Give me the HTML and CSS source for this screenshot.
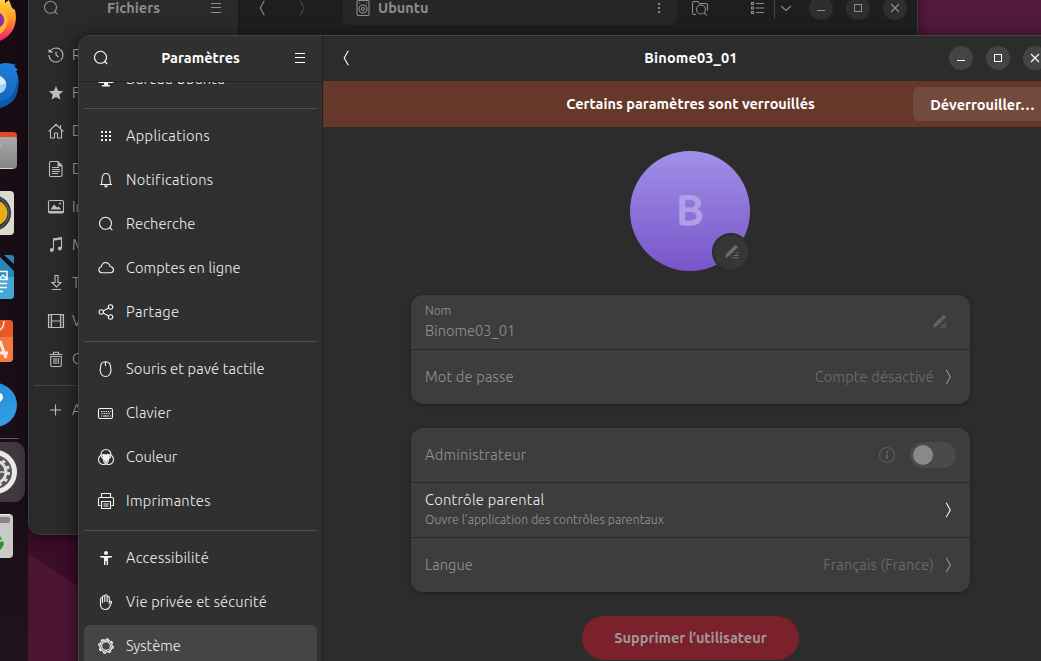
FILE: index.html
```html
<!DOCTYPE html>
<html lang="fr">
<head>
<meta charset="utf-8">
<title>Paramètres</title>
<link rel="stylesheet" href="styles.css">
</head>
<body>
<svg class="defs" width="0" height="0">
  <symbol id="search" viewBox="0 0 16 16"><circle cx="7.5" cy="7.3" r="6"/><path d="M11.7 11.5L14.3 14.2"/></symbol>
  <symbol id="menu" viewBox="0 0 16 16"><path d="M3 3.5h10M3 7.5h10M3 12.5h10" shape-rendering="crispEdges"/></symbol>
  <symbol id="back" viewBox="0 0 16 16"><path d="M10.3.8L6.2 8l4.1 7.2"/></symbol>
  <symbol id="next" viewBox="0 0 16 16"><path d="M6.2.8L10.3 8l-4.1 7.2"/></symbol>
  <symbol id="pencil" viewBox="0 0 16 16"><path class="fill" d="M12.400.800L15 3.400 5.800 12.600 1 15 2.300 10.400z"/><path d="M12.500 9.800h3M10 12.200h5.500M8 14.600h7.500"/></symbol>
  <symbol id="min" viewBox="0 0 16 16"><path d="M4 10.5h8" shape-rendering="crispEdges"/></symbol>
  <symbol id="max" viewBox="0 0 16 16"><path d="M4.5 4.5h7v7h-7z" shape-rendering="crispEdges"/></symbol>
  <symbol id="close" viewBox="0 0 16 16"><path d="M4 4l8 8M12 4l-8 8"/></symbol>
</svg>

<div class="desktop">
  <svg class="wallpaper" width="1041" height="661"><path d="M0 530L28 553 78 586 320 740H0z"/></svg>

  <aside class="dock">
    <svg width="28" height="661">
      <defs>
        <linearGradient id="fire" x2="0" y2="1"><stop stop-color="#ffe13b"/><stop offset=".5" stop-color="#ff9a29"/><stop offset="1" stop-color="#f2186d"/></linearGradient>
        <linearGradient id="blue" x2="0" y2="1"><stop stop-color="#207ddc"/><stop offset="1" stop-color="#1263b8"/></linearGradient>
        <linearGradient id="grey" x2="0" y2="1"><stop stop-color="#a9a9a9"/><stop offset="1" stop-color="#838383"/></linearGradient>
        <linearGradient id="help" x2="0" y2="1"><stop stop-color="#278ddb"/><stop offset="1" stop-color="#35a0e5"/></linearGradient>
      </defs>
      <path fill="url(#fire)" d="M0-4L5 0 5 3 9 0 12 8 15 10C18 22 14 35 0 41z"/>
      <path fill="#ffb62e" d="M0 9C9 12 11 26 0 34z"/><path fill="#8930b5" d="M0 13c5 3 6 11 0 14z"/>
      <path fill="url(#blue)" d="M0 64c5-2 10-1 16 1l-2 1 4 4-2 1C22 82 18 103 0 108z"/>
      <path fill="#0d58a8" d="M0 101c9 0 16-8 17-21 4 14-4 25-17 28z"/><path fill="#dceef9" d="M0 76c4 2 7 5 6 10-1 4-3 6-6 7z"/><path fill="#a5d2f2" d="M0 85l6-2c1 5-2 9-6 10z"/>
      <path fill="#df4a25" d="M0 132h13q4 0 4 4v10H0z"/><path fill="url(#grey)" d="M0 137h14q3 0 3 3v25q0 4-4 4H0z"/><path stroke="#d5d5d5" d="M0 168.5h13M0 145.5h1"/>
      <rect x="-10" y="191" width="24" height="44" rx="4" fill="#dcd9ce"/><circle cx="-7" cy="213" r="18" fill="#2b2d31"/><circle cx="-5" cy="213" r="12.500" fill="#e7ad19"/><path fill="none" stroke="#555963" stroke-width="1.5" d="M0 198q9 6 9 15t-9 15"/>
      <path fill="#2389b8" d="M0 257l14 14v24q0 4-4 4H0z"/><path fill="#43a8d7" d="M0 277h14v18q0 4-4 4H0z"/><path fill="#2389b8" d="M4 255h7q3 0 3 3v6z"/><path stroke="#fff" fill="none" stroke-width="1.5" d="M0 271.5h7v8H0M0 283.5h7M0 287.5h7M0 291.5h3M0 278l3-3 4 4"/>
      <path fill="#e95825" d="M0 320h10q3 0 3 4v34q0 4-4 4H0z"/><path fill="#f4793e" d="M0 337h13v21q0 4-4 4H0z"/><path stroke="#ffe9df" fill="none" stroke-width="1.500" d="M0 330q4-3 4-9"/><path stroke="#ffe9df" fill="none" stroke-width="3" d="M0 341l6 17M0 353h8"/>
      <circle cx="-5" cy="405" r="22" fill="url(#help)"/><path fill="#fff" d="M0 393c4 2 4 6 0 9z"/>
      <path stroke="#5f5960" d="M0 438.5h19"/>
      <rect x="-20" y="442" width="45" height="60" rx="11" fill="#413840"/>
      <circle cx="-5" cy="472" r="19.500" fill="#555" stroke="#e9e9e7" stroke-width="5"/>
      <circle cx="-5" cy="472" r="11" fill="none" stroke="#dcdcdc" stroke-width="3"/><circle cx="-5" cy="472" r="13.500" fill="none" stroke="#dcdcdc" stroke-width="3" stroke-dasharray="3.100 4"/><path stroke="#dcdcdc" stroke-width="1.500" d="M0 472h5"/>
      <rect x="-10" y="514" width="23" height="44" rx="4" fill="#c9c9c9"/><path stroke="#eee" d="M0 514.500h10"/><path fill="#858585" d="M0 517h8q2 0 2 2v2q0 2-2 2H0z"/><path fill="#26992a" d="M0 536l2 3-2 1zM0 542l3-1 1 3-2 4-2 2z"/>
    </svg>
  </aside>

  <section class="window files">
    <div class="files-side">
      <header class="files-head"><svg class="icon"><use href="#search"/></svg><b class="t-fichiers">Fichiers</b><svg class="icon"><use href="#menu"/></svg></header>
      <nav class="places">
        <a><svg class="icon" viewBox="0 0 16 16"><path d="M2.5 3.7A7 7 0 1 1 1 8M8 4.5V8l2.500 2"/><path class="fill" d="M.5 2l5 3.500H.500z"/></svg>Récents</a>
        <a><svg class="icon" viewBox="0 0 16 16"><path class="fill" d="M8 1l2 4.800 5.200.4-4 3.400 1.300 5L8 11.900l-4.500 2.700 1.300-5-4-3.400 5.200-.4z"/></svg>Favoris</a>
        <a><svg class="icon" viewBox="0 0 16 16"><path d="M.7 8.500L8 1.300l7.300 7.200M2.500 7v8h4v-5h3v5h4V7M12.500 2v3"/></svg>Dossier personnel</a>
        <a><svg class="icon" viewBox="0 0 16 16"><path d="M2.500.5h7.500l4 4v9.500q0 1.500-1.500 1.500h-10Q1.500 15.500 1.500 14V2Q1.500.5 2.500.5zM4 6.500h7M4 8.500h8M4 10.500h8M4 12.500h6"/><path class="fill" d="M9.500.5l5 5h-5z"/></svg>Documents</a>
        <a><svg class="icon" viewBox="0 0 16 16"><rect x=".5" y="1.500" width="15" height="12.500" rx="1.500"/><path class="fill" d="M2.500 10.500l3.500-5 3 3 1.500-1 3 3zM.5 12h15v2H.5z"/><circle class="fill" cx="12" cy="4.500" r="1"/></svg>Images</a>
        <a><svg class="icon" viewBox="0 0 16 16"><path d="M5.500 12.500V2l8-1.300V11"/><path class="fill" d="M5.500 1.800l8-1.300v2l-8 1.300z"/><circle class="fill" cx="3.800" cy="13" r="1.900"/><circle class="fill" cx="11.800" cy="11.500" r="1.900"/></svg>Musique</a>
        <a><svg class="icon" viewBox="0 0 16 16"><path d="M7 .5h3v7h3L8.500 12 4 7.500h3zM4 14.500h9"/></svg>Téléchargements</a>
        <a><svg class="icon" viewBox="0 0 16 16"><path d="M.5 1.500h15v13H.5zM3.500 1.500v13M12.500 1.500v13M3.500 8h9"/><path d="M2 2v12M14 2v12" stroke-dasharray="1 1.300"/></svg>Vidéos</a>
        <a><svg class="icon" viewBox="0 0 16 16"><path d="M1.500 3.500h13M5.500 3V1.300h5V3M2.700 5.500h10.600V14q0 1.500-1.500 1.500H4.200Q2.700 15.500 2.700 14zM6 7v6M8 7v6M10.300 7v6"/></svg>Corbeille</a>
        <hr>
        <a><svg class="icon" viewBox="0 0 16 16"><path d="M7.500 2.500v11M2 8h11"/></svg>Autres emplacements</a>
      </nav>
    </div>
    <div class="files-main">
      <svg class="icon"><use href="#back"/></svg>
      <svg class="icon faint"><use href="#next"/></svg>
      <div class="path"><svg class="icon" viewBox="0 0 16 16"><rect x="2" y=".5" width="12" height="15" rx="1.500"/><circle cx="8" cy="9" r="4"/><circle cx="8" cy="9" r="1.500"/><path d="M4 3h1M11 3h1"/></svg><b class="t-ubuntu">Ubuntu</b><svg class="icon" viewBox="0 0 16 16"><path class="fill" d="M7 3h2v2H7zM7 7h2v2H7zM7 11h2v2H7z"/></svg></div>
      <svg class="icon folder" viewBox="0 0 16 16"><path d="M4 14.500H2Q.5 14.500.5 13V3Q.5 1.500 2 1.500h4l1.500 2H14q1.500 0 1.500 1.500v5.500"/><circle cx="9" cy="9.500" r="4.500"/><path d="M12.300 12.800l2.500 2.500"/></svg>
      <svg class="icon list" viewBox="0 0 16 16"><path d="M2.500 2.500h2v2h-2zM2.500 7h2v2h-2zM2.500 11.500h2v2h-2zM7 3.500h8M7 8h8M7 12.500h8"/></svg>
      <i class="bar"></i>
      <svg class="icon drop" viewBox="0 0 16 16"><path d="M3 6L8 10.500 13 6"/></svg>
      <div class="controls"><i><svg class="icon"><use href="#min"/></svg></i><i><svg class="icon"><use href="#max"/></svg></i><i><svg class="icon"><use href="#close"/></svg></i></div>
    </div>
  </section>

  <section class="window settings">
    <aside class="side">
      <header class="side-head"><svg class="icon"><use href="#search"/></svg><b class="t-param">Paramètres</b><svg class="icon"><use href="#menu"/></svg></header>
      <div class="scroll">
        <nav class="list-nav">
          <a><svg class="icon" viewBox="0 0 16 16"><rect x=".5" y="2" width="15" height="9.500" rx="1.500"/><path class="fill" d="M6 12h4v2h2v1.500H4V14h2z"/><circle cx="8" cy="8" r="2"/></svg><span class="n-bureau">Bureau Ubuntu</span></a>
          <hr>
          <a><svg class="icon" viewBox="0 0 16 16"><path class="fill" d="M3 3h2v2H3zM7 3h2v2H7zM11 3h2v2h-2zM3 7h2v2H3zM7 7h2v2H7zM11 7h2v2h-2zM3 11h2v2H3zM7 11h2v2H7zM11 11h2v2h-2z"/></svg><span class="n-app">Applications</span></a>
          <a><svg class="icon" viewBox="0 0 16 16"><path d="M2 12.500h12M3.500 12.300L4.300 5Q5 1.500 8 1.500T11.700 5l.8 7.300"/><path class="fill" d="M6 13.500h4Q9.500 15.500 8 15.500T6 13.500z"/></svg><span class="n-notif">Notifications</span></a>
          <a><svg class="icon"><use href="#search"/></svg><span class="n-rech">Recherche</span></a>
          <a><svg class="icon" viewBox="0 0 16 16"><path d="M3.500 12.700A3 3 0 0 1 3.200 6.800Q4.300 2.600 7.700 2.500 11 2.600 12.200 6.500 15.500 7 15.500 9.700 15.300 12.700 12.500 12.700z"/></svg><span class="n-compte">Comptes en ligne</span></a>
          <a><svg class="icon" viewBox="0 0 16 16"><circle cx="3.300" cy="8" r="2.200"/><circle cx="12.500" cy="3" r="2.200"/><circle cx="12.500" cy="13" r="2.200"/><path d="M5.300 7l5.200-3M5.300 9l5.200 3"/></svg><span class="n-part">Partage</span></a>
          <hr>
          <a><svg class="icon" viewBox="0 0 16 16"><path d="M2.500 6.500Q2.500.8 7.500.8T12.700 6.500L13 9.500Q12.500 15.500 7.600 15.500T2.200 9.500zM7.500 1v4"/></svg><span class="n-souris">Souris et pavé tactile</span></a>
          <a><svg class="icon" viewBox="0 0 16 16"><rect x=".5" y="3.500" width="14" height="10" rx="1.500"/><path d="M3 6.500h10M3.500 8.500h9" stroke-dasharray="1.300 1"/><path d="M3 11h1M5 11h6M12 11h1"/></svg><span class="n-clav">Clavier</span></a>
          <a><svg class="icon" viewBox="0 0 16 16"><circle cx="8" cy="5.500" r="5"/><circle cx="5.500" cy="10.500" r="5"/><circle cx="10.500" cy="10.500" r="5"/><path class="fill" d="M4 6.300q4-1.600 8 0l-1.500 4-2.500 4-2.500-4z"/></svg><span class="n-coul">Couleur</span></a>
          <a><svg class="icon" viewBox="0 0 16 16"><path d="M3.500 4.500v-4h9v4M2.500 12.500H.500V6Q.5 4.500 2 4.500h12q1.500 0 1.500 1.500v6.500h-2M3.500 8.500h9v7h-9zM5.500 11h5M5.500 13h5"/></svg><span class="n-impr">Imprimantes</span></a>
          <hr>
          <a><svg class="icon" viewBox="0 0 16 16"><circle class="fill" cx="8" cy="3" r="2"/><path class="fill" d="M2 6h12v1.300L10 8v7H8.600v-4H7.400v4H6V8L2 7.300z"/></svg><span class="n-acc">Accessibilité</span></a>
          <a><svg class="icon" viewBox="0 0 16 16"><path d="M2.500 11V5q0-1.200 1-1.200t1 1.200v4V3q0-1.200 1.200-1.200T6.800 3v5-6Q6.800.7 8 .7T9.100 2v6-4.500q0-1.200 1.100-1.200t1.100 1.200V9l1-1.500q1.500-.5 1.200 1L11 14q-1.500 1.500-3.500 1.500-4.500 0-5-4.500z"/></svg><span class="n-vie">Vie privée et sécurité</span></a>
          <a class="active"><svg class="icon" viewBox="0 0 16 16"><circle cx="8" cy="8" r="6.200" stroke-width="1.300"/><circle cx="8" cy="8" r="4.400"/><circle cx="8" cy="8" r="7.200" stroke-width="1.300" stroke-dasharray="2.800 2.855"/></svg><span class="n-sys">Système</span></a>
        </nav>
      </div>
    </aside>
    <main class="pane">
      <header class="pane-head"><svg class="icon"><use href="#back"/></svg><b class="t-user">Binome03_01</b><div class="controls"><i><svg class="icon"><use href="#min"/></svg></i><i><svg class="icon"><use href="#max"/></svg></i><i><svg class="icon"><use href="#close"/></svg></i></div></header>
      <div class="banner"><b class="t-lock">Certains paramètres sont verrouillés</b><button class="unlock"><span class="t-unlock">Déverrouiller…</span></button></div>
      <div class="content">
        <div class="avatar"><span>B</span><i class="edit"><svg class="icon"><use href="#pencil"/></svg></i></div>
        <div class="card">
          <div class="row dim"><div class="label name"><small class="c-nom">Nom</small><span class="c-bin">Binome03_01</span></div><svg class="icon pen"><use href="#pencil"/></svg></div>
          <div class="row dim"><span class="c-mdp">Mot de passe</span><span class="value c-des">Compte désactivé</span><svg class="icon"><use href="#next"/></svg></div>
        </div>
        <div class="card">
          <div class="row dim"><span class="c-admin">Administrateur</span><svg class="icon info" viewBox="0 0 16 16"><circle cx="8" cy="8" r="7.500"/><path class="fill" d="M7 4h2v2H7zM7 7h2v5H7z"/></svg><i class="switch"></i></div>
          <div class="row"><div class="label parental"><span class="c-par">Contrôle parental</span><small class="c-ouv">Ouvre l’application des contrôles parentaux</small></div><svg class="icon"><use href="#next"/></svg></div>
          <div class="row dim"><span class="c-lang">Langue</span><span class="value c-fr">Français (France)</span><svg class="icon"><use href="#next"/></svg></div>
        </div>
        <button class="delete"><span class="t-del">Supprimer l’utilisateur</span></button>
      </div>
    </main>
  </section>
</div>
</body>
</html>
```
FILE: styles.css
```css
* { box-sizing: border-box; }
body { margin: 0; overflow: hidden; font: 300 14.67px/20px Ubuntu, "Noto Sans", sans-serif; color: #f2f2f2; }
b, button { font-size: 14.5px; font-weight: 600; }
button { font-family: inherit; border: 0; padding: 0; color: inherit; white-space: nowrap; }
.defs { position: absolute; }
.desktop { position: relative; width: 1041px; height: 661px; overflow: hidden; background: linear-gradient(#531a3c, #3a0d28 535px); }
.wallpaper { position: absolute; }
.wallpaper path { fill: #4c1534; }
.icon { width: 16px; height: 16px; flex: none; fill: none; stroke: currentColor; stroke-width: 1.1; overflow: visible; }
.icon .fill, .fill { fill: currentColor; stroke: none; }
hr { border: 0; height: 1px; margin: 0; background: #505050; flex: none; }

.dock { position: absolute; left: 0; top: 0; width: 28px; height: 661px; background: linear-gradient(#180c14, #1a0f17 500px, #20131c); }
.dock svg { display: block; }

.window { position: absolute; display: flex; overflow: hidden; }
.files { left: 28px; top: -16px; width: 890px; height: 551px; border: 1px solid #3b3b3b; border-radius: 12px; background: #222; box-shadow: 0 3px 12px #0006; color: #8d8d8d; }
.files-side { width: 210px; background: #2a2a2a; border-right: 1px solid #1a1a1a; }
.files-head { display: flex; justify-content: space-between; align-items: center; height: 46px; padding: 0 14px; }
.places { display: flex; flex-direction: column; padding: 5px 6px 0 5px; color: #bdbdbd; }
.places a { display: flex; align-items: center; gap: 8px; height: 38px; padding-left: 14px; white-space: nowrap; }
.places hr { margin: 7px 0 5px; background: #454545; }
.files-main { flex: 1; display: flex; align-items: center; height: 48px; padding: 0 10px 2px 15px; background: #1e1e1e; }
.faint { margin-left: 24px; opacity: .35; }
.path { display: flex; align-items: center; gap: 7px; width: 334px; height: 34px; margin-left: 33px; padding: 0 10px 0 12px; border-radius: 6px; background: #272727; }
.path .icon:last-child { margin-left: auto; }
.folder { margin-left: 15px; }
.list { margin-left: 41px; }
.bar { width: 1px; height: 22px; margin-left: 9px; background: #484848; }
.drop { margin-left: 3px; }
.controls { display: flex; gap: 13px; margin-left: auto; }
.controls i { display: flex; align-items: center; justify-content: center; width: 24px; height: 24px; border-radius: 50%; background: #444; }
.files .controls i { background: #2e2e2e; }

.settings { left: 78px; top: 35px; width: 980px; height: 640px; border: 1px solid #444; border-radius: 12px 12px 0 0; background: #2c2c2c; box-shadow: 0 3px 16px #000a; }
.side { display: flex; flex-direction: column; width: 244px; background: #303030; border-right: 1px solid #202020; }
.side-head { display: flex; align-items: center; justify-content: space-between; flex: none; height: 46px; padding: 0 14px 2px 14px; border-bottom: 1px solid #222; color: #fff; }
.scroll { flex: 1; overflow: hidden; }
.list-nav { display: flex; flex-direction: column; margin-top: -25px; padding: 0 5px; }
.list-nav a { display: flex; align-items: center; flex: none; gap: 12px; height: 42px; margin: 1px 0; padding-left: 14px; border-radius: 6px; white-space: nowrap; }
.list-nav hr { margin: 7px 0 5px; }
.list-nav .active { background: #454545; }
.n-app, .n-part { letter-spacing: .36px; }
.n-notif, .n-impr, .n-acc, .c-admin, .c-par { letter-spacing: .27px; }
.n-souris, .n-vie, .c-mdp, .c-des, .c-fr, .n-clav { letter-spacing: .18px; }
.n-rech, .n-compte, .c-ouv { letter-spacing: .1px; }

.pane { flex: 1; min-width: 0; }
.pane-head { display: grid; grid-template-columns: 1fr auto 1fr; align-items: center; height: 45px; padding: 0 10px 2px 15px; color: #fff; }
.pane-head b { margin-right: 3px; letter-spacing: .15px; }
.banner { display: grid; grid-template-columns: 1fr auto 1fr; align-items: center; height: 46px; padding: 0 5px 0 6px; background: #663829; color: #fff; }
.banner b { grid-column: 2; }
.unlock { justify-self: end; width: 139px; height: 34px; border-radius: 6px; background: #734b3d; }
.content { display: flex; flex-direction: column; align-items: center; gap: 24px; padding: 24px 0 0; }
.avatar { position: relative; display: flex; align-items: center; justify-content: center; width: 120px; height: 120px; border-radius: 50%; background: linear-gradient(#a190e8, #7855c9); }
.avatar span { padding-bottom: 4px; color: #b09fe6; font-size: 43px; font-weight: 700; }
.edit { position: absolute; left: 82px; top: 82px; display: flex; align-items: center; justify-content: center; width: 38px; height: 38px; border: 2px solid #2c2c2c; border-radius: 50%; background: #363636; color: #6c6c6c; }
.edit .icon { width: 15px; height: 15px; margin-bottom: 1px; }
.card { width: 559px; margin-left: 1px; border-radius: 12px; background: #3d3d3d; box-shadow: 0 1px 4px #0005; }
.row { display: flex; align-items: center; height: 54px; padding: 0 14px; }
.row + .row { height: 55px; border-top: 1px solid #272727; }
.dim { color: #959595; }
.label { display: flex; flex-direction: column; }
.name { padding-bottom: 2px; }
.label small { font-size: 12.2px; color: #9a9a9a; }
.row > .icon { margin-left: auto; }
.value { margin-left: auto; color: #707070; }
.row > .value + .icon { margin-left: 6px; }
.row > .pen { margin: 0 9px 1px auto; width: 15px; height: 15px; color: #616161; }
.row > .info { margin-right: 15px; color: #5c5c5c; }
.switch { width: 46px; height: 26px; padding: 3px; border-radius: 13px; background: #4a4a4a; }
.switch::before { content: ""; display: block; width: 20px; height: 20px; border-radius: 50%; background: #898989; }
.delete { width: 217px; height: 44px; padding-bottom: 1px; margin-left: 1px; border-radius: 22px; background: #7a212b; color: #a09a9a; }
```
